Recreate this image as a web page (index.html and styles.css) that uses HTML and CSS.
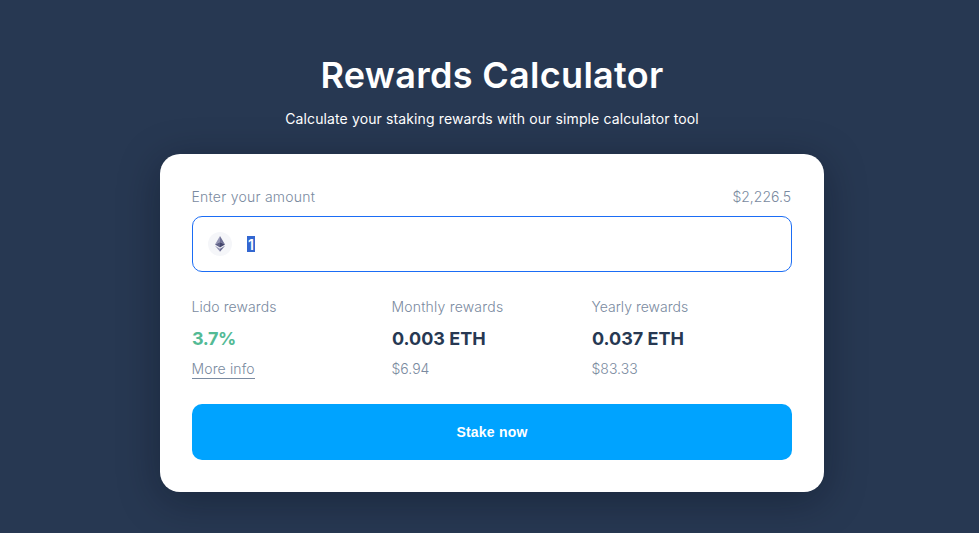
FILE: index.html
```html
<!DOCTYPE html>
<html lang="en">
<head>
<meta charset="utf-8">
<title>Rewards Calculator</title>
<link rel="stylesheet" href="styles.css">
</head>
<body>
<main class="page">
  <h1 class="title">Rewards Calculator</h1>
  <p class="subtitle">Calculate your staking rewards with our simple calculator tool</p>
  <section class="card">
    <div class="amount-head">
      <span class="label label-amount">Enter your amount</span>
      <span class="label label-price">$2,226.5</span>
    </div>
    <div class="field">
      <svg class="coin" width="24" height="24" viewBox="0 0 24 24">
        <circle cx="12" cy="12" r="12" fill="#f5f6f9"/>
        <path d="M12 4v6l-5 2.6z" fill="#9495b5"/>
        <path d="M12 4v6l5 2.6z" fill="#6c6e94"/>
        <path d="M12 10v5.5l-5-2.9z" fill="#616389"/>
        <path d="M12 10v5.5l5-2.9z" fill="#44466d"/>
        <path d="M12 16.7v3.1l-5-6z" fill="#9495b5"/>
        <path d="M12 16.7v3.1l5-6z" fill="#6c6e94"/>
      </svg>
      <span class="selected">1</span>
    </div>
    <div class="stats">
      <div class="stat">
        <span class="label label-lido">Lido rewards</span>
        <strong class="value value-apr">3.7%</strong>
        <a class="label more">More info</a>
      </div>
      <div class="stat">
        <span class="label label-monthly">Monthly rewards</span>
        <strong class="value">0.003 ETH</strong>
        <span class="label">$6.94</span>
      </div>
      <div class="stat">
        <span class="label label-yearly">Yearly rewards</span>
        <strong class="value">0.037 ETH</strong>
        <span class="label">$83.33</span>
      </div>
    </div>
    <button class="stake" type="button">Stake now</button>
  </section>
</main>
</body>
</html>
```
FILE: styles.css
```css
* { box-sizing: border-box; }
body {
  margin: 0;
  background: #273852;
  font-family: Inter, "Liberation Sans", sans-serif;
}
.page {
  height: 533px;
  padding: 50px 0 0 5px;
  display: flex;
  flex-direction: column;
  align-items: center;
  overflow: hidden;
}
.title {
  margin: 0;
  color: #fff;
  font-size: 36px;
  line-height: 50px;
  font-weight: 600;
  letter-spacing: 0.3px;
}
.subtitle {
  margin: 7px 0 0;
  color: #fff;
  font-size: 14px;
  line-height: 24px;
  font-weight: 400;
  letter-spacing: 0.12px;
}
.card {
  width: 664px;
  height: 338px;
  margin-top: 23px;
  padding: 32px;
  border-radius: 20px;
  background: #fff;
  box-shadow: 0 8px 40px rgba(0, 10, 20, 0.35);
  display: flex;
  flex-direction: column;
}
.amount-head {
  display: flex;
  justify-content: space-between;
  height: 22px;
}
.label {
  margin-left: -0.5px;
  color: #7a8aa0;
  font-size: 14px;
  line-height: 22px;
  font-weight: 300;
}
.label-amount { letter-spacing: 0.24px; }
.label-price { margin-right: 1px; }
.label-lido { letter-spacing: 0.08px; }
.label-monthly { letter-spacing: 0.2px; }
.field {
  margin-top: 8px;
  height: 56px;
  flex: none;
  padding-left: 15px;
  border: 1px solid #1b6df5;
  border-radius: 10px;
  display: flex;
  align-items: center;
  gap: 15px;
}
.selected {
  width: 8px;
  height: 16px;
  background: #3367d1;
  color: #fff;
  font-size: 14px;
  line-height: 17px;
  font-weight: 600;
  text-align: center;
}
.stats {
  margin-top: 24px;
  height: 84px;
  display: grid;
  grid-template-columns: repeat(3, 200px);
}
.stat {
  display: flex;
  flex-direction: column;
  align-items: flex-start;
}
.value {
  margin: 7px 0 5px;
  color: #273852;
  font-size: 18px;
  line-height: 28px;
  font-weight: 670;
}
.value-apr {
  color: #53ba95;
  letter-spacing: -0.4px;
}
.more {
  height: 21px;
  border-bottom: 1px solid #7a8aa0;
  letter-spacing: 0.14px;
}
.stake {
  height: 56px;
  margin-top: 24px;
  flex: none;
  border: 0;
  border-radius: 10px;
  background: #00a3ff;
  color: #fff;
  font: bold 14px/24px "Liberation Sans", Arial, sans-serif;
  letter-spacing: 0.2px;
}
```
